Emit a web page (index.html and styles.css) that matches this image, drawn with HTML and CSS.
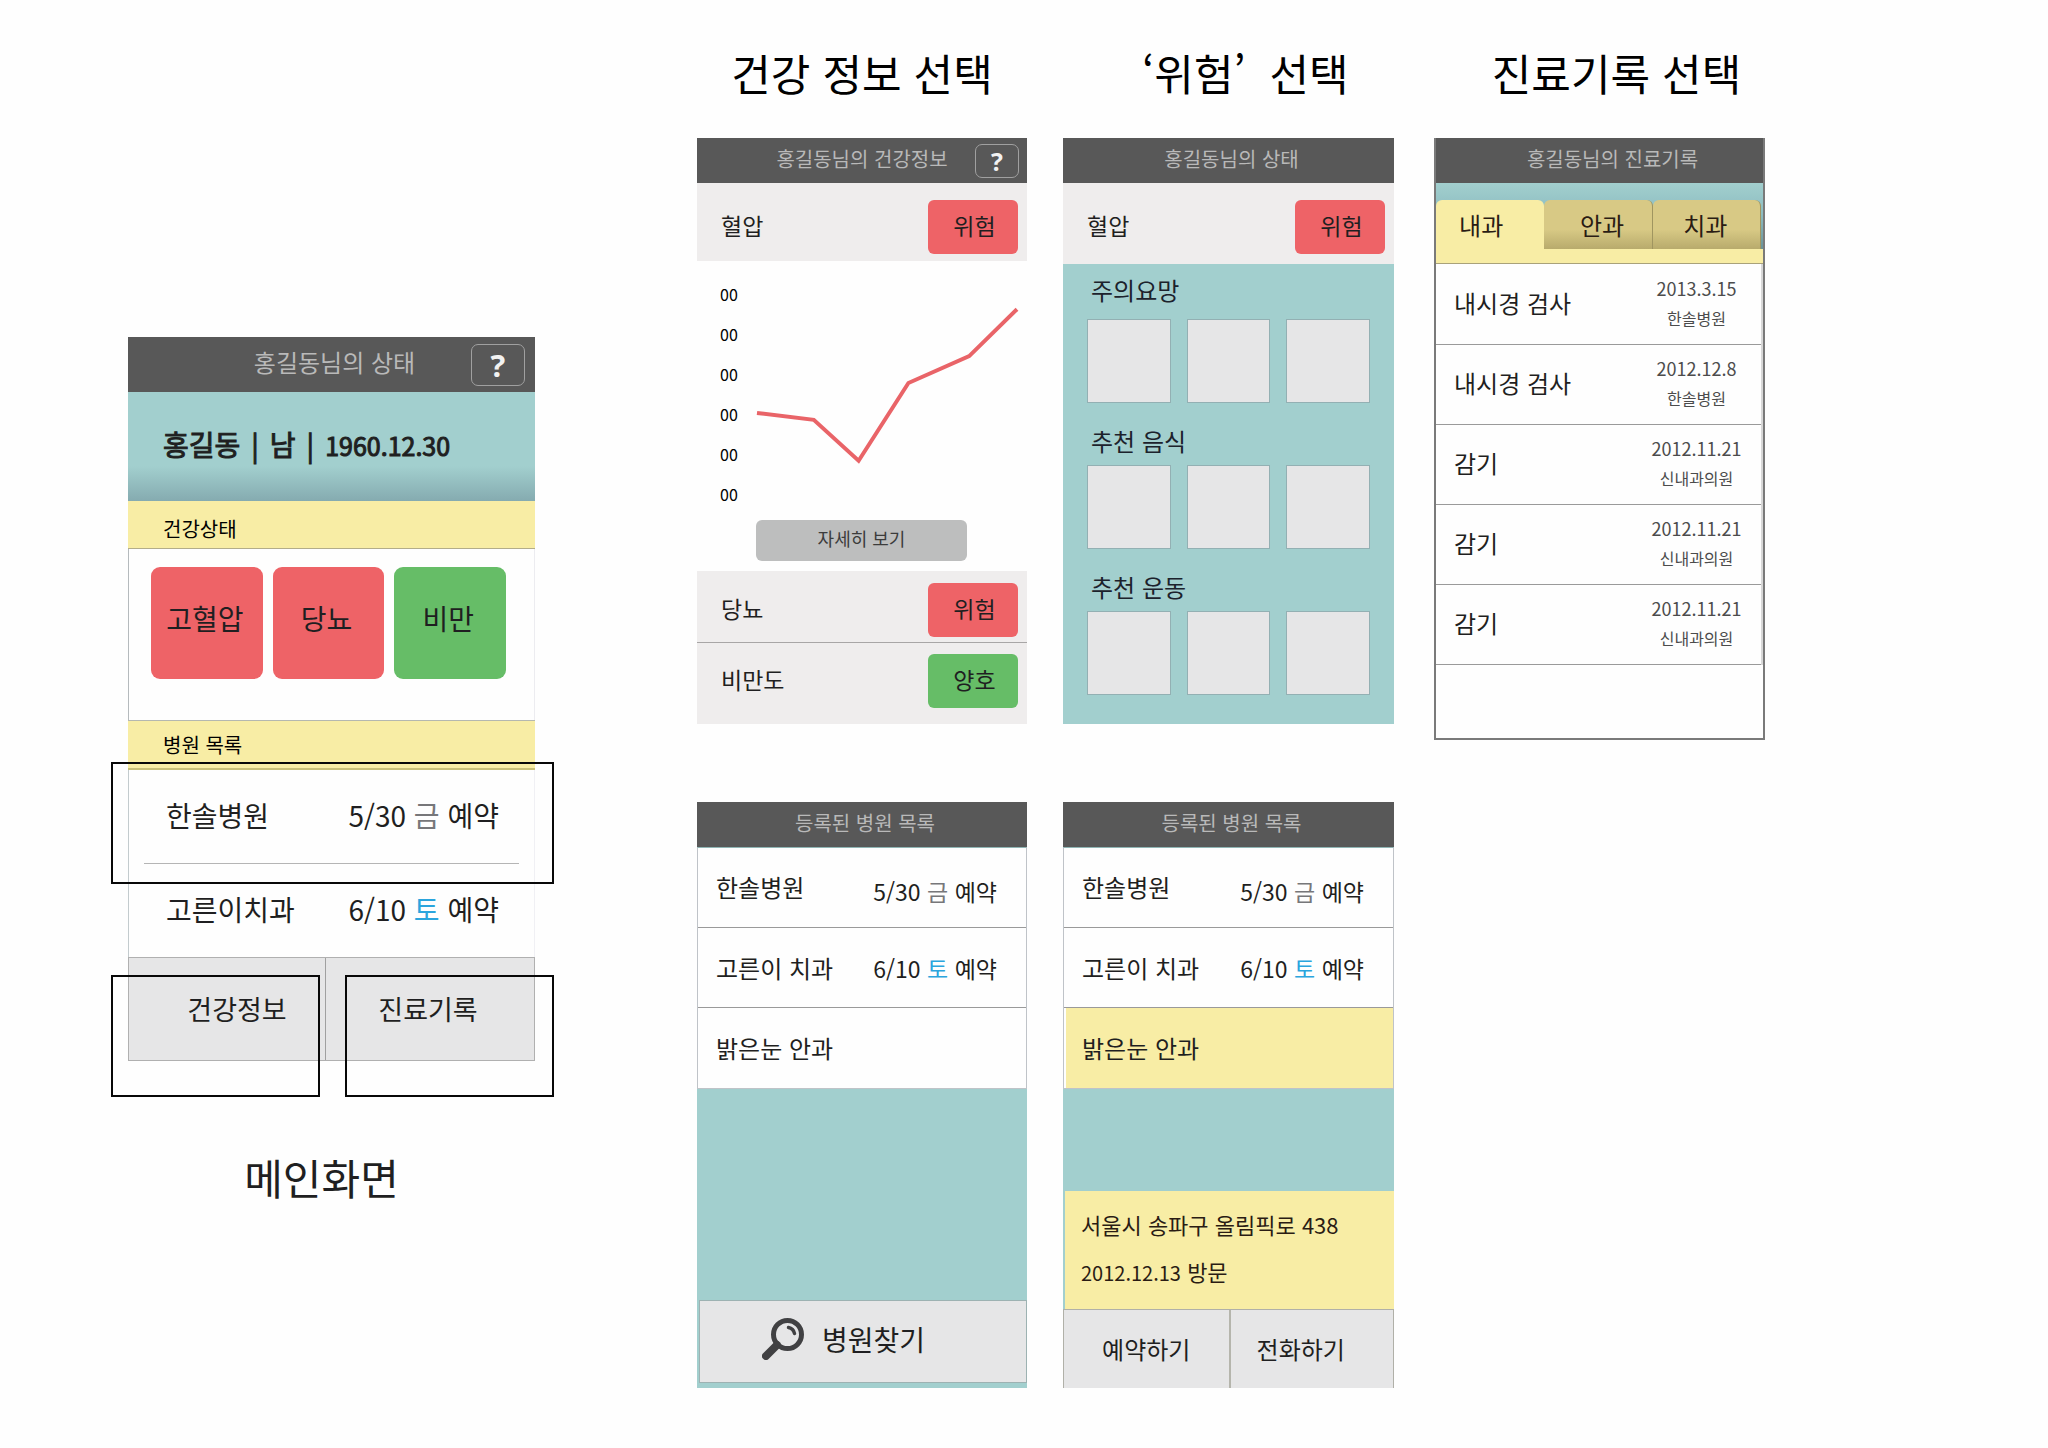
FILE: index.html
```html
<!DOCTYPE html>
<html lang="ko">
<head>
<meta charset="utf-8">
<meta name="viewport" content="width=device-width, initial-scale=1">
<title>건강 정보 앱 화면</title>
<link rel="stylesheet" href="styles.css">
</head>
<body>
<main class="board">

  <section class="column column-main">
    <article class="screen main-screen">
      <header class="bar bar-large">
        <h2 class="bar-title">홍길동님의 상태</h2>
        <button class="help" type="button">?</button>
      </header>
      <p class="profile"><span>홍길동</span><span>|</span><span>남</span><span>|</span><span class="birth">1960.12.30</span></p>
      <h3 class="band">건강상태</h3>
      <div class="conditions">
        <button class="condition danger" type="button">고혈압</button>
        <button class="condition danger" type="button">당뇨</button>
        <button class="condition good" type="button">비만</button>
      </div>
      <h3 class="band band-lined">병원 목록</h3>
      <ul class="visits">
        <li class="visit"><span>한솔병원</span><span>5/30 <span class="weekday">금</span> 예약</span></li>
        <li class="visit"><span>고른이치과</span><span>6/10 <span class="saturday">토</span> 예약</span></li>
      </ul>
      <nav class="main-nav">
        <button class="nav-button nav-health" type="button">건강정보</button>
        <button class="nav-button nav-records" type="button">진료기록</button>
      </nav>
      <div class="callout callout-list"></div>
      <div class="callout callout-health"></div>
      <div class="callout callout-records"></div>
    </article>
    <h1 class="caption">메인화면</h1>
  </section>

  <section class="column column-health">
    <h1 class="heading">건강 정보 선택</h1>
    <article class="screen upper">
      <header class="bar">
        <h2 class="bar-title">홍길동님의 건강정보</h2>
        <button class="help" type="button">?</button>
      </header>
      <div class="metric metric-top"><span>혈압</span><button class="badge danger" type="button">위험</button></div>
      <div class="chart-panel">
        <div class="chart">
          <ul class="axis"><li>00</li><li>00</li><li>00</li><li>00</li><li>00</li><li>00</li></ul>
          <svg class="plot" viewBox="0 0 264 160" role="img" aria-label="혈압 변화">
            <polyline points="1,107 58,114 103,155 153,77 214,50 262,3" fill="none" stroke="#e96468" stroke-width="4"/>
          </svg>
        </div>
        <button class="details" type="button">자세히 보기</button>
      </div>
      <div class="metric metric-mid"><span>당뇨</span><button class="badge danger" type="button">위험</button></div>
      <div class="metric metric-last"><span>비만도</span><button class="badge good" type="button">양호</button></div>
    </article>
    <article class="screen lower">
      <header class="bar"><h2 class="bar-title">등록된 병원 목록</h2></header>
      <ul class="hospitals">
        <li class="hospital"><span>한솔병원</span><span class="booking">5/30 <span class="weekday">금</span> 예약</span></li>
        <li class="hospital"><span>고른이 치과</span><span class="booking">6/10 <span class="saturday">토</span> 예약</span></li>
        <li class="hospital"><span>밝은눈 안과</span></li>
      </ul>
      <div class="filler"></div>
      <button class="find" type="button">
        <svg class="find-icon" viewBox="0 0 42 42" aria-hidden="true">
          <circle cx="25.500" cy="16.500" r="14" fill="none" stroke="#414143" stroke-width="5"/>
          <path d="M15 27 L4 38" stroke="#414143" stroke-width="8" stroke-linecap="round"/>
          <path d="M26.500 9.500 Q31.500 10.500 32.500 15.500" fill="none" stroke="#414143" stroke-width="3.500" stroke-linecap="round"/>
        </svg>
        <span>병원찾기</span>
      </button>
    </article>
  </section>

  <section class="column column-danger">
    <h1 class="heading heading-shifted">‘위험’&nbsp; 선택</h1>
    <article class="screen upper">
      <header class="bar"><h2 class="bar-title">홍길동님의 상태</h2></header>
      <div class="metric metric-top metric-tall"><span>혈압</span><button class="badge danger" type="button">위험</button></div>
      <div class="advice">
        <h3 class="advice-title">주의요망</h3>
        <div class="cards"><div class="card"></div><div class="card"></div><div class="card"></div></div>
        <h3 class="advice-title">추천 음식</h3>
        <div class="cards"><div class="card"></div><div class="card"></div><div class="card"></div></div>
        <h3 class="advice-title">추천 운동</h3>
        <div class="cards"><div class="card"></div><div class="card"></div><div class="card"></div></div>
      </div>
    </article>
    <article class="screen lower">
      <header class="bar"><h2 class="bar-title">등록된 병원 목록</h2></header>
      <ul class="hospitals">
        <li class="hospital"><span>한솔병원</span><span class="booking">5/30 <span class="weekday">금</span> 예약</span></li>
        <li class="hospital"><span>고른이 치과</span><span class="booking">6/10 <span class="saturday">토</span> 예약</span></li>
        <li class="hospital hospital-selected"><span>밝은눈 안과</span></li>
      </ul>
      <div class="filler"></div>
      <div class="address">
        <p>서울시 송파구 올림픽로 438</p>
        <p><span class="visited">2012.12.13</span> 방문</p>
      </div>
      <div class="actions">
        <button class="action" type="button">예약하기</button>
        <button class="action" type="button">전화하기</button>
      </div>
    </article>
  </section>

  <section class="column column-records">
    <h1 class="heading heading-shifted">진료기록 선택</h1>
    <article class="screen records-screen">
      <header class="bar"><h2 class="bar-title">홍길동님의 진료기록</h2></header>
      <div class="tabs" role="tablist">
        <button class="tab tab-active" type="button" role="tab" aria-selected="true">내과</button>
        <button class="tab" type="button" role="tab" aria-selected="false">안과</button>
        <button class="tab" type="button" role="tab" aria-selected="false">치과</button>
      </div>
      <table class="records">
        <tbody>
          <tr><th scope="row">내시경 검사</th><td><span class="date">2013.3.15</span><span class="clinic">한솔병원</span></td></tr>
          <tr><th scope="row">내시경 검사</th><td><span class="date">2012.12.8</span><span class="clinic">한솔병원</span></td></tr>
          <tr><th scope="row">감기</th><td><span class="date">2012.11.21</span><span class="clinic">신내과의원</span></td></tr>
          <tr><th scope="row">감기</th><td><span class="date">2012.11.21</span><span class="clinic">신내과의원</span></td></tr>
          <tr><th scope="row">감기</th><td><span class="date">2012.11.21</span><span class="clinic">신내과의원</span></td></tr>
        </tbody>
      </table>
    </article>
  </section>

</main>
</body>
</html>
```

FILE: styles.css
```css
:root {
  --ink: #1f1f21;
  --bar: #585858;
  --teal: #a2cfce;
  --yellow: #f8eda5;
  --danger: #ee6367;
  --good: #66bd67;
  --panel: #e6e6e7;
  --line: #9a9a9a;
}

* { box-sizing: border-box; }

body {
  margin: 0;
  background: #fefefe;
  color: var(--ink);
  font-family: "Noto Sans CJK KR", sans-serif;
  font-size: 24px;
  line-height: 32px;
}

h1, h2, h3, p, ul { margin: 0; padding: 0; font-weight: 400; }
ul { list-style: none; }

button {
  margin: 0;
  padding: 0;
  border: 0;
  background: none;
  color: inherit;
  font: inherit;
  cursor: pointer;
}

/* Board columns, with the margins between them as flexible tracks */
.board {
  display: grid;
  grid-template-columns: 128fr 407fr 162fr 330fr 36fr 331fr 40fr 331fr 283fr;
  align-items: start;
  padding-bottom: 60px;
}
.column { min-width: 0; }
.column-main { grid-column: 2; padding-top: 337px; }
.column-health { grid-column: 4; }
.column-danger { grid-column: 6; }
.column-records { grid-column: 8; }

.heading {
  padding: 44px 0 38px;
  color: #000;
  font-size: 43px;
  line-height: 56px;
  text-align: center;
  white-space: nowrap;
}
.heading-shifted { padding-left: 34px; }
.caption {
  padding: 88px 20px 0 0;
  font-size: 42px;
  line-height: 56px;
  text-align: center;
}

/* Title bar */
.bar {
  display: grid;
  grid-template-columns: 1fr auto 1fr;
  align-items: center;
  height: 45px;
  padding: 0 8px;
  background: var(--bar);
  color: #b9b9b9;
}
.bar-title {
  grid-column: 2;
  padding: 0 0 4px 6px;
  font-size: 20px;
  line-height: 28px;
  white-space: nowrap;
}
.help {
  justify-self: end;
  width: 44px;
  height: 34px;
  border: 1px solid #a0a0a0;
  border-radius: 7px;
  color: #f2f2f2;
  font: 700 25px/30px "Open Sans", sans-serif;
}
.bar-large { height: 55px; padding: 0 10px; }
.bar-large .bar-title { padding-bottom: 6px; font-size: 24px; }
.bar-large .help { width: 54px; height: 42px; font-size: 31px; line-height: 38px; }
.column-health .upper .bar-title { padding-left: 0; }
.records-screen .bar-title { padding-left: 26px; }

.danger { background: var(--danger); }
.good { background: var(--good); }
.weekday { color: #77777a; }
.saturday { color: #2ba5dd; }

/* Main screen */
.main-screen { position: relative; font-size: 28px; }
.profile {
  display: flex;
  align-items: baseline;
  gap: 11px;
  padding: 36px 35px;
  height: 109px;
  background: linear-gradient(var(--teal) 68%, #85abb0);
  font-size: 28px;
  line-height: 32px;
  -webkit-text-stroke: 1px currentColor;
}
.birth { font-size: 25px; }
.band {
  padding: 13px 35px 5px;
  background: var(--yellow);
  border-bottom: 1px solid #b3ad8a;
  color: #000;
  font-size: 20px;
  line-height: 29px;
}
.band-lined {
  padding: 9px 35px 9px;
  border-top: 1px solid #b5b8b0;
  border-bottom: 2px solid #c9c079;
}
.conditions {
  display: grid;
  grid-template-columns: repeat(3, 1fr);
  gap: 10px;
  padding: 18px 28px 41px 22px;
  border-left: 1px solid #b5babd;
  border-right: 1px solid #ececf0;
}
.condition { height: 112px; padding: 0 4px 10px 0; border-radius: 9px; }
.visits {
  padding: 0 15px;
  border-left: 1px solid #c3cbce;
  border-right: 1px solid #f0f0f4;
}
.visit {
  display: flex;
  justify-content: space-between;
  padding: 29px 20px 32px 22px;
}
.visit:first-child { border-bottom: 1px solid #b5b5b5; }
.main-nav {
  display: grid;
  grid-template-columns: 198fr 209fr;
  background: var(--panel);
  border: 1px solid #b0b0b0;
}
.nav-button { height: 102px; font-size: 27px; }
.nav-health { padding-left: 20px; border-right: 1px solid #a0a0a0; }
.nav-records { padding-right: 4px; }

/* Click areas drawn over the main screen */
.callout { position: absolute; border: 2px solid #080808; pointer-events: none; }
.callout-list { top: 425px; left: -17px; right: -19px; height: 122px; }
.callout-health { top: 638px; left: -17px; width: 209px; height: 122px; }
.callout-records { top: 638px; right: -19px; width: 209px; height: 122px; }

/* Health metrics */
.metric {
  display: flex;
  justify-content: space-between;
  padding: 11px 9px 5px 24px;
  background: #efeded;
  font-size: 23px;
}
.metric span { padding-top: 9px; }
.badge { width: 90px; height: 54px; padding: 0 0 4px 3px; border-radius: 6px; }
.metric-top { padding-top: 17px; padding-bottom: 7px; }
.metric-tall { padding-bottom: 10px; }
.metric-mid { padding-top: 12px; border-bottom: 1px solid #a8a6a6; }
.metric-last { padding-bottom: 16px; }

.chart-panel { padding: 13px 8px 10px 23px; }
.chart { display: flex; }
.axis {
  display: flex;
  flex-direction: column;
  justify-content: space-between;
  width: 36px;
  height: 238px;
  font-size: 16px;
  line-height: 40px;
  color: #000;
}
.plot { flex: 1; min-width: 0; height: 160px; margin-top: 32px; }
.details {
  display: block;
  width: 211px;
  height: 41px;
  margin: 8px auto 0 36px;
  padding-bottom: 6px;
  background: #bdbebe;
  border-radius: 6px;
  color: #3c3c3c;
  font-size: 18px;
}

.advice { padding: 0 24px 29px; background: var(--teal); }
.advice-title { padding: 20px 0 6px 4px; color: #1c222c; font-size: 24px; line-height: 36px; }
.advice-title:first-child { padding-top: 8px; padding-bottom: 11px; }
.cards { display: grid; grid-template-columns: repeat(3, 1fr); gap: 16px; }
.card { height: 84px; background: var(--panel); border: 1px solid #93b0b3; }

/* Registered hospitals */
.lower {
  display: flex;
  flex-direction: column;
  min-height: 586px;
  margin-top: 78px;
  background: var(--teal);
}
.hospitals { border: 1px solid #bfc3c8; border-top: 1px solid #8fb5b4; background: #fefefe; }
.hospital {
  display: flex;
  align-items: center;
  justify-content: space-between;
  height: 80px;
  padding: 0 29px 0 18px;
  border-bottom: 1px solid var(--line);
}
.hospital:first-child { padding-bottom: 2px; }
.hospital:last-child { border-bottom: 0; }
.hospital-selected { margin-left: 2px; padding-left: 16px; background: var(--yellow); }
.booking { font-size: 23px; }
.hospital:first-child .booking { padding-top: 8px; }
.filler { flex: 1; }
.find {
  display: flex;
  align-items: center;
  gap: 18px;
  height: 83px;
  margin: 0 0 5px 2px;
  padding: 0 0 6px 62px;
  border: 1px solid #9db2b2;
  background: var(--panel);
  font-size: 28px;
}
.find-icon { width: 42px; height: 42px; }

.address {
  margin-left: 2px;
  padding: 17px 16px 20px;
  background: var(--yellow);
  color: #2a1c14;
  font-size: 22px;
}
.address p + p { padding-top: 15px; }
.visited { font-size: 20px; }
.actions {
  display: grid;
  grid-template-columns: 1fr 1fr;
  border: 1px solid #b0b0a8;
  border-bottom: 0;
  background: var(--panel);
}
.action { height: 78px; }
.action + .action { border-left: 2px solid #b5b5ac; padding-right: 22px; }

/* Medical records */
.records-screen { min-height: 602px; border: 2px solid #7a7a7a; border-top: 0; }
.tabs {
  display: grid;
  grid-template-columns: repeat(3, 1fr);
  padding: 17px 2px 0 0;
  background:
    linear-gradient(var(--yellow), var(--yellow)) bottom / 100% 14px no-repeat,
    linear-gradient(var(--teal), #8cbcc0 40%, #5d8286);
  border-bottom: 1px solid #a9a27a;
}
.tab {
  height: 49px;
  margin-bottom: 14px;
  padding: 0 0 0 8px;
  border-right: 1px solid #a09560;
  border-radius: 6px 6px 0 0;
  background: linear-gradient(#d8c985 60%, #b8ab6c);
  color: #2a1c14;
}
.tab:last-child { padding: 0 2px 0 0; }
.tab-active {
  height: 63px;
  margin-bottom: 0;
  padding: 0 18px 14px 0;
  border-right: 0;
  background: var(--yellow);
}
.records { width: 100%; border-collapse: collapse; border-right: 2px solid #d8d8d8; }
.records tr { height: 80px; border-bottom: 1px solid var(--line); }
.records th { padding: 0 0 2px 18px; font-weight: 400; text-align: left; }
.records td { width: 130px; padding: 0 0 4px; white-space: nowrap; color: #4c4c4c; text-align: center; }
.date, .clinic { display: block; }
.date { font-size: 18px; line-height: 32px; }
.clinic { font-size: 16px; line-height: 28px; }
```
